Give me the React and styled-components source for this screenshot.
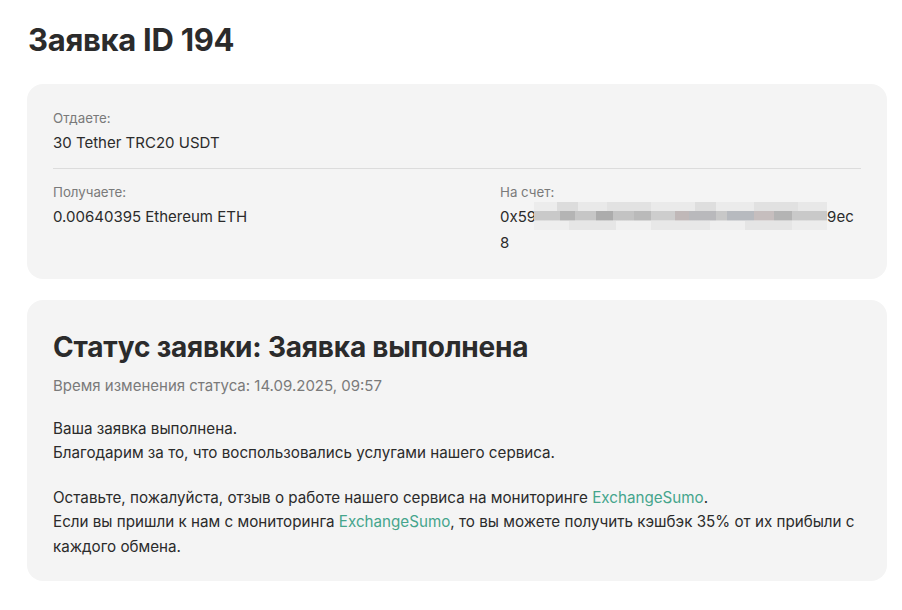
import React from 'react';
import styled, { createGlobalStyle } from 'styled-components';

const GlobalStyle = createGlobalStyle`
  body {
    margin: 0;
    background: #ffffff;
    font-family: Inter, "Noto Sans", sans-serif;
    color: #2b2b2b;
  }
`;

const Page = styled.main`
  padding: 20px 15px 0 27px;
  display: flex;
  flex-direction: column;
`;

const Title = styled.h1`
  margin: 0 0 24px 1px;
  font-size: 31px;
  line-height: 40px;
  font-weight: 700;
  letter-spacing: -0.3px;
  color: #2b2b2b;
`;

const Card = styled.section`
  background: #f4f4f4;
  border-radius: 16px;
  padding: ${(p) => p.$pad || '24px 26px'};
  margin-bottom: 21px;
`;

const Row = styled.div`
  display: grid;
  grid-template-columns: ${(p) => (p.$split ? '447px 1fr' : '1fr')};
  padding: ${(p) => p.$pad || '0'};
  border-bottom: ${(p) => (p.$divider ? '1px solid #dcdcdc' : 'none')};
`;

const Field = styled.div`
  display: flex;
  flex-direction: column;
  gap: 2px;
  min-width: 0;
`;

const Label = styled.span`
  font-size: 13.3px;
  line-height: 19px;
  color: #7a7a7a;
`;

const Value = styled.span`
  font-size: 15px;
  line-height: 25px;
  color: #2b2b2b;
  word-break: break-all;
`;

const Mosaic = styled.span`
  display: inline-block;
  vertical-align: middle;
  width: 293px;
  height: 28px;
  margin: -4px 0 0 -2px;
  background:
    linear-gradient(90deg,
      #ececec 0 8%, #dcdcdc 8% 15%, #e9e9e9 15% 25%, #e2e2e2 25% 40%,
      #eaeaea 40% 55%, #dedede 55% 62%, #ebebeb 62% 75%, #e1e1e1 75% 90%, #e8e8e8 90% 100%) top / 100% 33% no-repeat,
    linear-gradient(90deg,
      #c9c9c9 0 9%, #b4b4b4 9% 14%, #c6c6c6 14% 21%, #acacac 21% 27%, #c3c3c3 27% 34%,
      #bababa 34% 40%, #cdcdcd 40% 48%, #c0b8b8 48% 53%, #b9b9bc 53% 62%, #c8c8c8 62% 66%,
      #b7babf 66% 75%, #c6bebe 75% 82%, #b4b4b4 82% 88%, #c9c9c9 88% 100%) center / 100% 34% no-repeat,
    linear-gradient(90deg,
      #eeeeee 0 12%, #e6e6e6 12% 28%, #f0f0f0 28% 40%, #e8e8e8 40% 60%,
      #efefef 60% 72%, #e5e5e5 72% 88%, #ececec 88% 100%) bottom / 100% 33% no-repeat;
`;

const StatusTitle = styled.h2`
  margin: 0 0 10px;
  font-size: 28px;
  line-height: 34px;
  font-weight: 700;
  letter-spacing: -0.2px;
  color: #2b2b2b;
`;

const Meta = styled.p`
  margin: 0 0 19px;
  font-size: 15px;
  line-height: 24px;
  color: #7a7a7a;
`;

const Text = styled.p`
  margin: 0 0 20px;
  font-size: 15.2px;
  line-height: 24.5px;
  color: #2b2b2b;
  &:last-child {
    margin-bottom: 0;
  }
`;

const Link = styled.a`
  color: #45a58c;
  text-decoration: none;
`;

export default function App() {
  return (
    <>
      <GlobalStyle />
      <Page>
        <Title>Заявка ID 194</Title>
        <Card $pad="25px 26px 24px">
          <Row $divider $pad="0 0 13px">
            <Field>
              <Label>Отдаете:</Label>
              <Value>30 Tether TRC20 USDT</Value>
            </Field>
          </Row>
          <Row $split $pad="14px 0 0">
            <Field>
              <Label>Получаете:</Label>
              <Value>0.00640395 Ethereum ETH</Value>
            </Field>
            <Field>
              <Label>На счет:</Label>
              <Value>
                0x59<Mosaic />9ec8
              </Value>
            </Field>
          </Row>
        </Card>
        <Card $pad="30px 26px 22px">
          <StatusTitle>Статус заявки: Заявка выполнена</StatusTitle>
          <Meta>Время изменения статуса: 14.09.2025, 09:57</Meta>
          <Text>
            Ваша заявка выполнена.
            <br />
            Благодарим за то, что воспользовались услугами нашего сервиса.
          </Text>
          <Text>
            Оставьте, пожалуйста, отзыв о работе нашего сервиса на мониторинге{' '}
            <Link href="#">ExchangeSumo</Link>.
            <br />
            Если вы пришли к нам с мониторинга <Link href="#">ExchangeSumo</Link>, то вы
            можете получить кэшбэк 35% от их прибыли с каждого обмена.
          </Text>
        </Card>
      </Page>
    </>
  );
}
